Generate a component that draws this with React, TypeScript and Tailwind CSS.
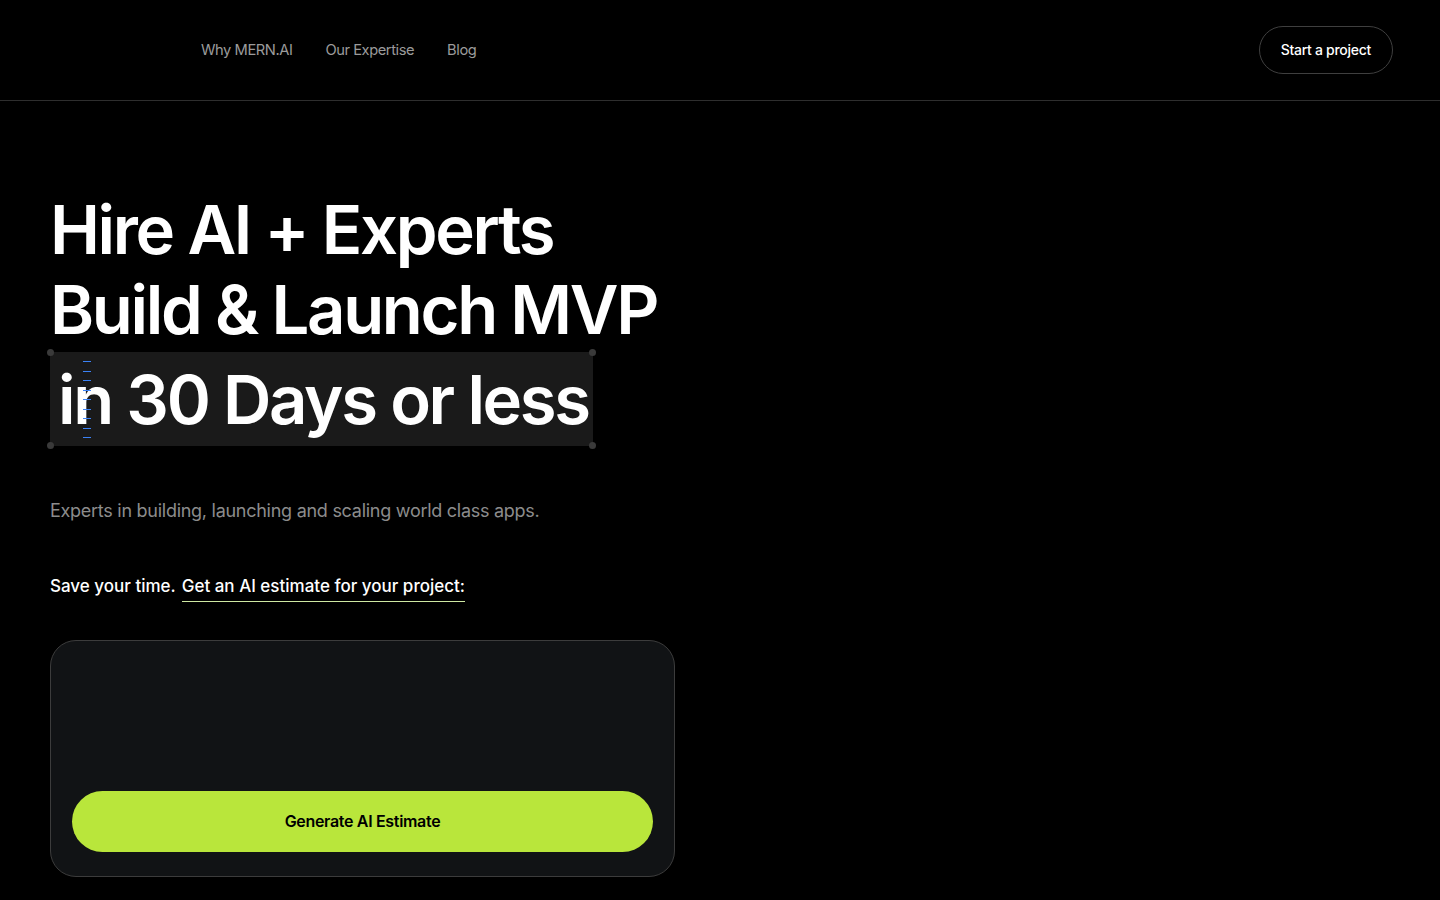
import React from "react";

const font = { fontFamily: "Inter, 'Noto Sans', sans-serif" };

function Header() {
  return (
    <header className="flex h-[101px] items-center justify-between border-b border-[#2e2e2e] pl-[201px] pr-[47px]">
      <nav className="flex items-center gap-[33px] text-[14.7px] tracking-[-0.03em] text-[#9b9b9b]">
        <a href="#">Why MERN.AI</a>
        <a href="#">Our Expertise</a>
        <a href="#">Blog</a>
      </nav>
      <button className="h-[48px] rounded-full border border-[#3f3f3f] px-[21px] pb-[2px] text-[14px] font-medium tracking-[-0.02em] text-white">
        Start a project
      </button>
    </header>
  );
}

function Dot({ className }: { className: string }) {
  return <span className={`absolute h-[7px] w-[7px] rounded-full bg-[#3a3a3a] ${className}`} />;
}

function Hero() {
  return (
    <section className="px-[50px] pt-[89px]">
      <h1 className="text-[67px] font-semibold leading-[80px] tracking-[-0.035em] text-white">
        <span className="block">Hire AI + Experts</span>
        <span className="block">Build &amp; Launch MVP</span>
        <span className="relative mt-[2px] inline-block h-[94px] bg-[#1a1a1a] pl-[8px] pr-[4px] leading-[96px]">
          in 30 Days or less
          <Dot className="-left-[3px] -top-[3px]" />
          <Dot className="-right-[3px] -top-[3px]" />
          <Dot className="-bottom-[3px] -left-[3px]" />
          <Dot className="-bottom-[3px] -right-[3px]" />
          <span className="absolute left-[33px] top-[9px] flex flex-col gap-[8.5px]">
            {Array.from({ length: 9 }).map((_, i) => (
              <span key={i} className="block h-px w-[8px] bg-[#3b82f6]" />
            ))}
          </span>
        </span>
      </h1>
      <p className="mt-[51px] text-[18px] tracking-[-0.015em] text-[#8c8c8c]">
        Experts in building, launching and scaling world class apps.
      </p>
      <p className="mt-[50px] flex items-start gap-[6px] text-[17px] font-medium text-white">
        <span>Save your time.</span>
        <span className="border-b border-[#cfe9a3] pb-[1px]">Get an AI estimate for your project:</span>
      </p>
      <div className="mt-[38px] flex h-[237px] w-[625px] flex-col justify-end rounded-[26px] border border-[#3c3c3c] bg-[#111315] px-[21px] pb-[24px]">
        <button className="h-[61px] w-full rounded-full bg-[#b9e63b] text-[16px] font-semibold tracking-[-0.02em] text-black">
          Generate AI Estimate
        </button>
      </div>
    </section>
  );
}

export default function App() {
  return (
    <div className="min-h-[900px] w-full bg-black" style={font}>
      <Header />
      <Hero />
    </div>
  );
}
